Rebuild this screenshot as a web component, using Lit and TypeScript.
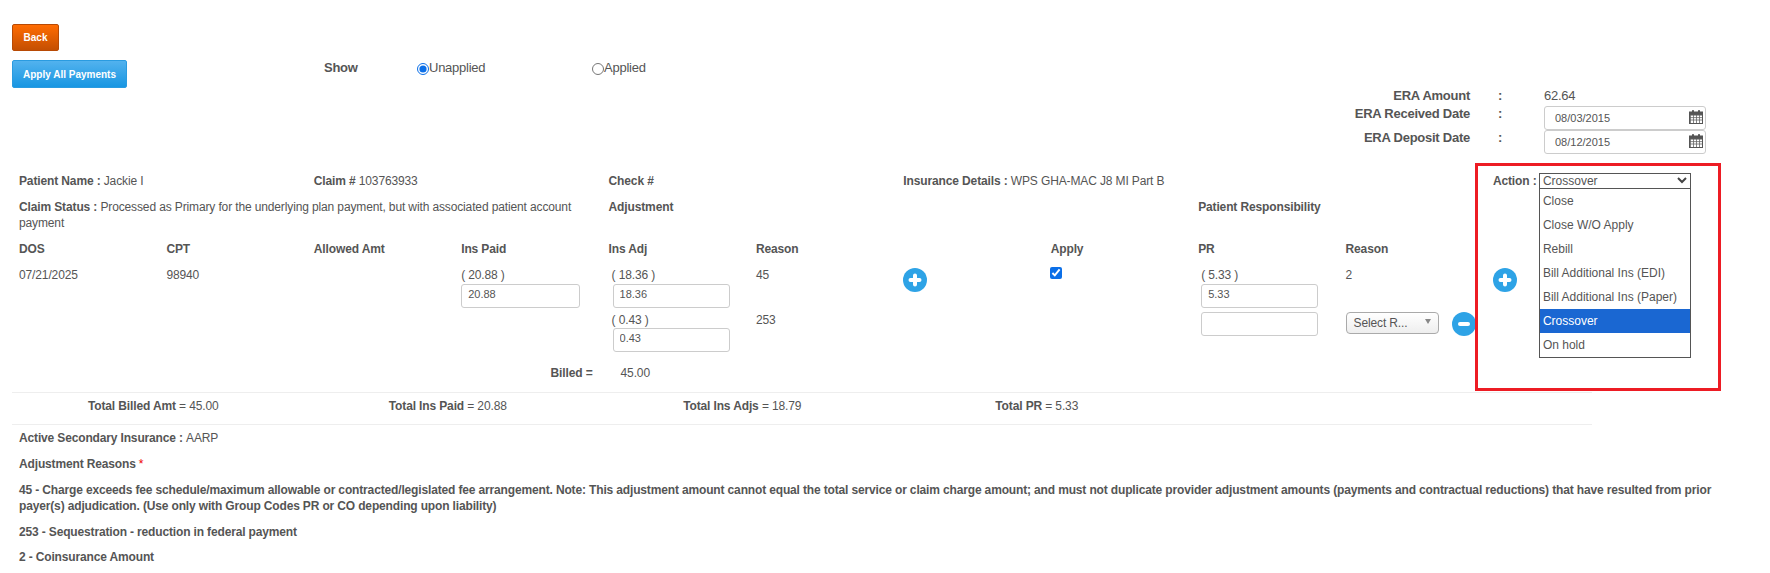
import { LitElement, html, css, svg } from "lit";
import { customElement } from "lit/decorators.js";

const plusIcon = html`<svg class="round" width="24" height="24" viewBox="0 0 24 24"><circle cx="12" cy="12" r="12" fill="#2ea3e6"/><path d="M12 7.5v9M7.5 12h9" stroke="#fff" stroke-width="4" stroke-linecap="round"/></svg>`;
const minusIcon = html`<svg class="round" width="24" height="24" viewBox="0 0 24 24"><circle cx="12" cy="12" r="12" fill="#2ea3e6"/><path d="M8 12h8" stroke="#fff" stroke-width="4" stroke-linecap="round"/></svg>`;
const calCells = [1.5, 4.5, 7.5, 10.5].map((x) => svg`<path d="M${x} 5v8" stroke="#666" stroke-width=".8"/>`);
const calRows = [5.2, 7.6, 10].map((y) => svg`<path d="M1 ${y}h12" stroke="#666" stroke-width=".8"/>`);
const calendar = html`<svg class="cal" width="14" height="14" viewBox="0 0 14 14"><rect x=".5" y="2" width="13" height="11.5" fill="#fff" stroke="#555"/><rect x=".5" y="2" width="13" height="3" fill="#555"/>${calCells}${calRows}<rect x="3" y="0" width="2" height="3.4" rx=".8" fill="#555"/><rect x="9" y="0" width="2" height="3.4" rx=".8" fill="#555"/></svg>`;

@customElement("app-root")
export class AppRoot extends LitElement {
  static styles = css`
    :host { display: block; width: 1770px; height: 573px; overflow: hidden; background: #fff;
      font: 12px/16px "Liberation Sans", Arial, sans-serif; color: #555; letter-spacing: -0.13px; }
    b { font-weight: 700; }
    .top { display: flex; padding: 24px 0 0 12px; }
    .buttons { width: 312px; display: flex; flex-direction: column; align-items: flex-start; gap: 9px; }
    .btn { box-sizing: border-box; color: #fff; font-weight: 700; font-size: 10px; display: flex; letter-spacing: 0;
      align-items: center; justify-content: center; border-radius: 2px; padding-top: 1px; }
    .back { width: 47px; height: 27px; background: linear-gradient(#ff6c02, #c44f02); border: 1px solid #b84a04; }
    .apply { width: 115px; height: 28px; background: linear-gradient(#52b2ee, #1896e2); border: 1px solid #2a9be0; }
    .show { display: flex; padding-top: 36px; font-size: 13px; letter-spacing: -0.25px; }
    .show b { width: 93px; }
    .opt { width: 175px; display: flex; align-items: flex-start; }
    .opt input { margin: 3px 0 0; width: 12px; height: 12px; accent-color: #0b6fe8; }
    .era { display: grid; grid-template-columns: 200px 74px 162px; justify-content: end; letter-spacing: -0.25px;
      padding-right: 64px; font-size: 13px; grid-template-rows: 19px 24px 24px; margin-top: -1px; }
    .era .lab { text-align: right; font-weight: 700; }
    .era .colon { padding-left: 28px; font-weight: 700; }
    .era .down { padding-top: 1px; }
    .date { position: relative; }
    .date input { width: 100%; height: 24px; padding-left: 10px; }
    .cal { position: absolute; right: 3px; top: 4px; }
    input.field { box-sizing: border-box; border: 1px solid #ccc; border-radius: 3px; font: 11px "Liberation Sans", Arial, sans-serif;
      color: #555; background: #fff; margin: 0; outline: none; display: block; }
    .claim { display: grid; grid-template-columns: repeat(10, 147.4px) 1fr; padding-left: 19px; row-gap: 10px; margin-top: 19px; }
    .s2 { grid-column: span 2; }
    .s4 { grid-column: span 4; }
    .s3 { grid-column: span 3; }
    .stack { display: flex; flex-direction: column; }
    .amt { padding-left: 3px; }
    input.money { width: 119px; height: 24px; padding: 0 6px 4px; margin-top: 1px; }
    input.wide { width: 117px; }
    input.adj { margin-left: 4px; }
    input.pr { margin-left: 3px; }
    input.tall { margin-top: 4px; }
    input.flush { margin-top: 0; }
    .amt.tall { margin-top: 4px; }
    .pushed { margin-top: 29px; }
    .ico { margin-top: 1px; }
    .round { display: block; }
    .check { margin: 0 0 0 -1px; width: 12px; height: 12px; accent-color: #0b6fe8; display: block; }
    .reasonrow { display: flex; align-items: flex-start; gap: 13px; margin-top: 29px; }
    .sel { box-sizing: border-box; width: 93px; height: 22px; border: 1px solid #aaa; border-radius: 4px;
      background: linear-gradient(#fff, #eee); display: flex; align-items: center; justify-content: space-between; padding: 0 7px; }
    .sel i { width: 0; height: 0; border: 3.5px solid transparent; border-top: 5px solid #888; border-bottom: 0; margin-bottom: 3px; }
    .billed { text-align: right; padding-right: 16px; margin-top: 3px; font-weight: 700; }
    .billedv { padding-left: 12px; margin-top: 3px; }
    .action { position: relative; display: flex; white-space: nowrap; }
    .action b { width: 46px; }
    .picker { position: relative; }
    .picker select { display: block; box-sizing: border-box; width: 152px; height: 16px; border: 1px solid #555; border-radius: 0;
      padding: 0 0 0 3px; appearance: none; font: 12px "Liberation Sans", Arial, sans-serif; color: #555; background: #fff; margin: 0; }
    .chev { position: absolute; right: 4px; top: 4px; }
    .list { position: absolute; left: 46px; top: 15px; width: 152px; box-sizing: border-box; border: 1px solid #555;
      background: #fff; z-index: 2; }
    .list div { height: 24px; line-height: 24px; padding-left: 3px; letter-spacing: 0; }
    .list .on { background: #1a67d2; color: #fff; }
    .redbox { position: absolute; left: -18px; top: -10px; width: 246px; height: 228px; box-sizing: border-box;
      border: 3px solid #ed1c24; pointer-events: none; z-index: 3; }
    .rule { height: 1px; background: #eee; margin: 0 178px 0 12px; }
    .rule.first { margin-top: 11px; }
    .totals { display: grid; grid-template-columns: repeat(4, 294.5px); padding: 5px 0 10px 6px; text-align: center; }
    .notes { padding: 5px 20px 0 19px; display: flex; flex-direction: column; gap: 10px; font-weight: 700; letter-spacing: -0.15px; }
    .notes .last { margin-top: -1px; }
    .notes span { font-weight: 400; }
    .notes em { color: #e00; font-style: normal; font-weight: 400; }
  `;

  render() {
    const options = ["Close", "Close W/O Apply", "Rebill", "Bill Additional Ins (EDI)", "Bill Additional Ins (Paper)", "Crossover", "On hold"];
    return html`
      <div class="top">
        <div class="buttons">
          <div class="btn back">Back</div>
          <div class="btn apply">Apply All Payments</div>
        </div>
        <div class="show">
          <b>Show</b>
          <label class="opt"><input type="radio" name="s" checked />Unapplied</label>
          <label class="opt"><input type="radio" name="s" />Applied</label>
        </div>
      </div>
      <div class="era">
        <div class="lab down">ERA Amount</div><div class="colon down">:</div><div class="down">62.64</div>
        <div class="lab">ERA Received Date</div><div class="colon">:</div>
        <div class="date"><input class="field" .value=${"08/03/2015"} />${calendar}</div>
        <div class="lab">ERA Deposit Date</div><div class="colon">:</div>
        <div class="date"><input class="field" .value=${"08/12/2015"} />${calendar}</div>
      </div>
      <div class="claim">
        <div class="s2"><b>Patient Name :</b> Jackie I</div>
        <div class="s2"><b>Claim #</b> 103763933</div>
        <div class="s2"><b>Check #</b></div>
        <div class="s4"><b>Insurance Details :</b> WPS GHA-MAC J8 MI Part B</div>
        <div class="action">
          <b>Action :</b>
          <div class="picker">
            <select><option>Crossover</option></select>
            <svg class="chev" width="10" height="7" viewBox="0 0 10 7"><path d="M1 1l4 4 4-4" fill="none" stroke="#444" stroke-width="2"/></svg>
          </div>
          <div class="list">${options.map((o) => html`<div class=${o === "Crossover" ? "on" : ""}>${o}</div>`)}</div>
          <div class="redbox"></div>
        </div>

        <div class="s4"><b>Claim Status :</b> Processed as Primary for the underlying plan payment, but with associated patient account payment</div>
        <div class="s4"><b>Adjustment</b></div>
        <div class="s3"><b>Patient Responsibility</b></div>

        <b>DOS</b><b>CPT</b><b>Allowed Amt</b><b>Ins Paid</b><b>Ins Adj</b><b>Reason</b><div></div><b>Apply</b><b>PR</b><b>Reason</b><div></div>

        <div>07/21/2025</div>
        <div>98940</div>
        <div></div>
        <div class="stack">( 20.88 )<input class="field money" .value=${"20.88"} /></div>
        <div class="stack">
          <div class="amt">( 18.36 )</div><input class="field money wide adj" .value=${"18.36"} />
          <div class="amt tall">( 0.43 )</div><input class="field money wide adj flush" .value=${"0.43"} />
        </div>
        <div>45<div class="pushed">253</div></div>
        <div class="ico">${plusIcon}</div>
        <div><input class="check" type="checkbox" checked /></div>
        <div class="stack">
          <div class="amt">( 5.33 )</div><input class="field money wide pr" .value=${"5.33"} />
          <input class="field money wide pr tall" />
        </div>
        <div>2<div class="reasonrow"><div class="sel">Select R...<i></i></div>${minusIcon}</div></div>
        <div class="ico">${plusIcon}</div>

        <div class="s3"></div>
        <div class="billed">Billed =</div>
        <div class="billedv">45.00</div>
      </div>
      <div class="rule first"></div>
      <div class="totals">
        <div><b>Total Billed Amt</b> = 45.00</div>
        <div><b>Total Ins Paid</b> = 20.88</div>
        <div><b>Total Ins Adjs</b> = 18.79</div>
        <div><b>Total PR</b> = 5.33</div>
      </div>
      <div class="rule"></div>
      <div class="notes">
        <div>Active Secondary Insurance : <span>AARP</span></div>
        <div>Adjustment Reasons <em>*</em></div>
        <div>45 - Charge exceeds fee schedule/maximum allowable or contracted/legislated fee arrangement. Note: This adjustment amount cannot equal the total service or claim charge amount; and must not duplicate provider adjustment amounts (payments and contractual reductions) that have resulted from prior payer(s) adjudication. (Use only with Group Codes PR or CO depending upon liability)</div>
        <div>253 - Sequestration - reduction in federal payment</div>
        <div class="last">2 - Coinsurance Amount</div>
      </div>
    `;
  }
}
